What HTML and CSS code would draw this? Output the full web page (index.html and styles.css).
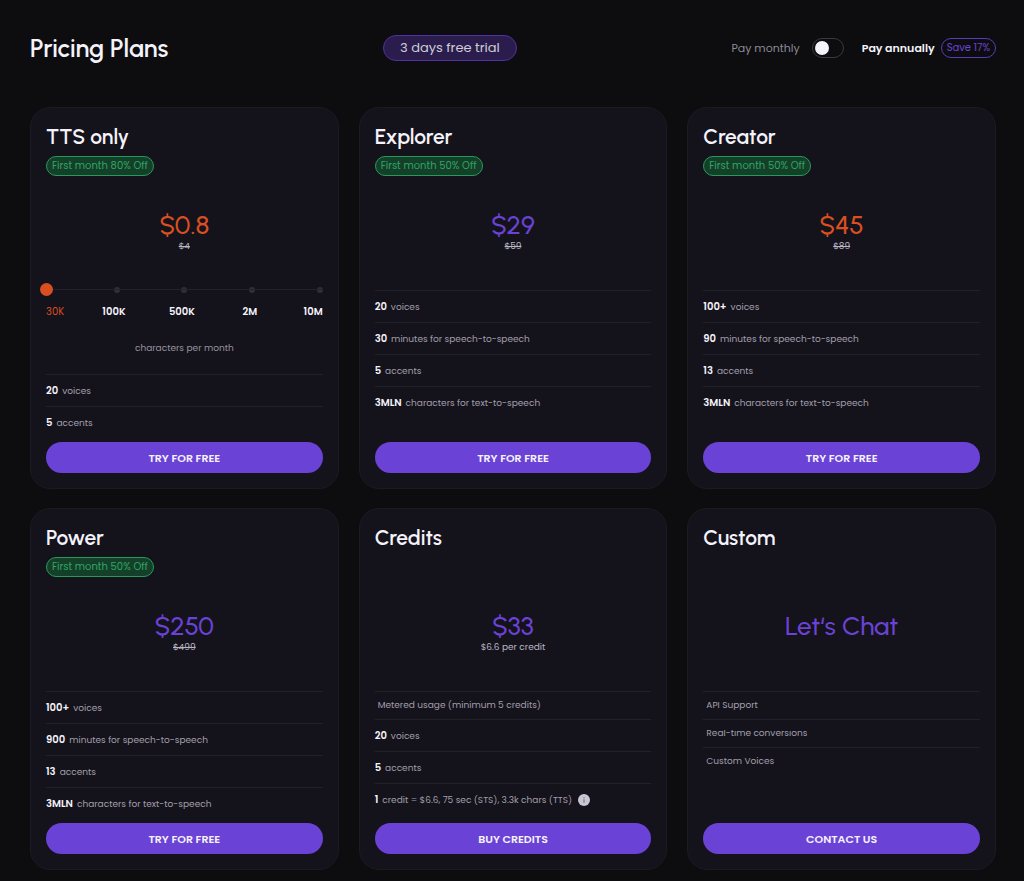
FILE: index.html
```html
<!DOCTYPE html>
<html lang="en">
<head>
<meta charset="utf-8">
<meta name="viewport" content="width=device-width, initial-scale=1">
<title>Pricing Plans</title>
<link rel="stylesheet" href="styles.css">
</head>
<body>
<main class="page">
  <header class="top">
    <h1 class="page-title">Pricing Plans</h1>
    <span class="trial">3 days free trial</span>
    <div class="billing">
      <label class="monthly" for="period">Pay monthly</label>
      <input class="switch" id="period" type="checkbox" role="switch">
      <label class="annual" for="period">Pay annually</label>
      <span class="save">Save 17%</span>
    </div>
  </header>

  <section class="plans">
    <article class="card">
      <header class="card-head"><h2 class="name">TTS only</h2><span class="offer">First month 80% Off</span></header>
      <div class="cost"><p class="price hot">$0.8</p><p class="note"><s>$4</s></p></div>
      <div class="volume">
        <div class="slider">
          <div class="ticks"><i></i><i></i><i></i><i></i><i></i></div>
          <input class="range" id="chars" type="range" min="0" max="4" value="0">
        </div>
        <div class="scale"><span class="current">30K</span><span>100K</span><span>500K</span><span>2M</span><span>10M</span></div>
        <label class="caption" for="chars">characters per month</label>
      </div>
      <ul class="features">
        <li><b>20</b> voices</li>
        <li><b>5</b> accents</li>
      </ul>
      <button class="cta" type="button">TRY FOR FREE</button>
    </article>

    <article class="card">
      <header class="card-head"><h2 class="name">Explorer</h2><span class="offer">First month 50% Off</span></header>
      <div class="cost"><p class="price">$29</p><p class="note"><s>$59</s></p></div>
      <ul class="features">
        <li><b>20</b> voices</li>
        <li><b>30</b> minutes for speech-to-speech</li>
        <li><b>5</b> accents</li>
        <li><b>3MLN</b> characters for text-to-speech</li>
      </ul>
      <button class="cta" type="button">TRY FOR FREE</button>
    </article>

    <article class="card">
      <header class="card-head"><h2 class="name">Creator</h2><span class="offer">First month 50% Off</span></header>
      <div class="cost"><p class="price hot">$45</p><p class="note"><s>$89</s></p></div>
      <ul class="features">
        <li><b>100+</b> voices</li>
        <li><b>90</b> minutes for speech-to-speech</li>
        <li><b>13</b> accents</li>
        <li><b>3MLN</b> characters for text-to-speech</li>
      </ul>
      <button class="cta" type="button">TRY FOR FREE</button>
    </article>

    <article class="card">
      <header class="card-head"><h2 class="name">Power</h2><span class="offer">First month 50% Off</span></header>
      <div class="cost"><p class="price">$250</p><p class="note"><s>$499</s></p></div>
      <ul class="features">
        <li><b>100+</b> voices</li>
        <li><b>900</b> minutes for speech-to-speech</li>
        <li><b>13</b> accents</li>
        <li><b>3MLN</b> characters for text-to-speech</li>
      </ul>
      <button class="cta" type="button">TRY FOR FREE</button>
    </article>

    <article class="card">
      <header class="card-head"><h2 class="name">Credits</h2></header>
      <div class="cost"><p class="price">$33</p><p class="note">$6.6 per credit</p></div>
      <ul class="features">
        <li class="plain">Metered usage (minimum 5 credits)</li>
        <li><b>20</b> voices</li>
        <li><b>5</b> accents</li>
        <li><b>1</b> credit = $6.6, 75 sec (STS), 3.3k chars (TTS)
          <svg class="info" viewBox="0 0 12 12" aria-hidden="true"><circle cx="6" cy="6" r="6" fill="#c9c5d3"/><path d="M6 5.2V8.8M6 3V4.2" stroke="#7d7988" stroke-width="1.2"/></svg>
        </li>
      </ul>
      <button class="cta" type="button">BUY CREDITS</button>
    </article>

    <article class="card">
      <header class="card-head"><h2 class="name">Custom</h2></header>
      <div class="cost"><p class="price">Let‘s Chat</p></div>
      <ul class="features">
        <li class="plain">API Support</li>
        <li class="plain"><span class="trimmed">Real-time conversions</span></li>
        <li class="plain">Custom Voices</li>
      </ul>
      <button class="cta" type="button">CONTACT US</button>
    </article>
  </section>
</main>
</body>
</html>
```
FILE: styles.css
```css
* { box-sizing: border-box; }

body {
  margin: 0;
  background: #0d0d0f;
  color: #f4f2fa;
  font: 10px/12px Poppins, Inter, sans-serif;
}

h1, h2, p, ul { margin: 0; padding: 0; }

.page { padding: 32px 28px 10px 30px; }

.top {
  display: flex;
  align-items: center;
  justify-content: space-between;
  height: 32px;
  margin-bottom: 43px;
}

.page-title, .name, .price { font-family: Urbanist, Lato, sans-serif; }
.page-title { font-size: 25px; line-height: 32px; font-weight: 600; }

.trial {
  padding: 0 16px;
  border: 1px solid #50319f;
  border-radius: 13px;
  background: #2a1d4e;
  color: #cfccd6;
  font-size: 13px;
  line-height: 24px;
}

.billing { display: flex; align-items: center; font-size: 11px; line-height: 16px; }
.monthly { color: #8c8a96; }
.annual { font-weight: 600; }

.switch {
  appearance: none;
  display: flex;
  align-items: center;
  width: 32px;
  height: 20px;
  margin: 0 18px 0 12px;
  padding: 0 2px;
  border: 1px solid #3a3942;
  border-radius: 10px;
}
.switch::before { content: ""; width: 14px; height: 14px; border-radius: 50%; background: #f4f2fa; }
.switch:checked { justify-content: flex-end; }

.save {
  margin-left: 6px;
  padding: 0 5px;
  border: 1px solid #5d3abb;
  border-radius: 10px;
  color: #6b42d6;
  font-size: 10px;
  line-height: 18px;
}

.plans {
  display: grid;
  grid-template-columns: repeat(auto-fit, minmax(280px, 1fr));
  gap: 19px 20px;
}

.card {
  display: flex;
  flex-direction: column;
  padding: 15px;
  border: 1px solid #1c1a22;
  border-radius: 20px;
  background: #14121b;
}

.card-head { min-height: 53px; }
.name { font-size: 21px; line-height: 27px; font-weight: 600; margin-bottom: 6px; }

.offer {
  display: inline-block;
  padding: 0 5px;
  border: 1px solid #279a5b;
  border-radius: 10px;
  background: #14402a;
  color: #30a566;
  line-height: 18px;
}

.cost { height: 114px; padding-top: 34px; text-align: center; }
.price { color: #6b42d6; font-size: 26px; line-height: 30px; font-weight: 500; }
.hot { color: #d94f21; }
.note { color: #b9b6c2; font-size: 9px; }

.volume { margin-top: -7px; padding-bottom: 20px; }
.slider { position: relative; height: 13px; }
.ticks { display: flex; align-items: center; justify-content: space-between; height: 13px; }
.ticks i { width: 6px; height: 6px; border-radius: 50%; background: #302e36; }

.range {
  appearance: none;
  position: absolute;
  top: 0;
  left: -6px;
  width: calc(100% + 6px);
  height: 13px;
  margin: 0;
  background: linear-gradient(#232129, #232129) center / 100% 1px no-repeat;
}
.range::-webkit-slider-thumb { appearance: none; width: 13px; height: 13px; border-radius: 50%; background: #d94f21; }

.scale {
  display: grid;
  grid-template-columns: 7fr 14fr 14fr 14fr 8fr;
  margin: 10px 0 24px;
  text-align: center;
  font-weight: 600;
}
.scale span:last-child { text-align: right; }
.scale .current { color: #d94f21; font-weight: 400; text-align: left; }
.caption { display: block; color: #96939f; font-size: 9px; text-align: center; }

.features { list-style: none; margin-bottom: 4px; }
.features li {
  display: flex;
  gap: 4px;
  height: 32px;
  border-top: 1px solid #222028;
  color: #a29fab;
  font-size: 9px;
  line-height: 32px;
  align-items: baseline;
}
.features b { color: #f4f2fa; font-size: 10px; font-weight: 600; }
.features .plain { height: 28px; line-height: 27px; padding-left: 3px; }
.trimmed { clip-path: inset(10px 0 0); }
.info { align-self: center; width: 12px; height: 12px; margin-left: 2px; }

.cta {
  margin-top: auto;
  height: 31px;
  border: 0;
  border-radius: 16px;
  background: #6b42d6;
  color: #f4f2fa;
  font: 600 11px/16px Poppins, Inter, sans-serif;
}
```
